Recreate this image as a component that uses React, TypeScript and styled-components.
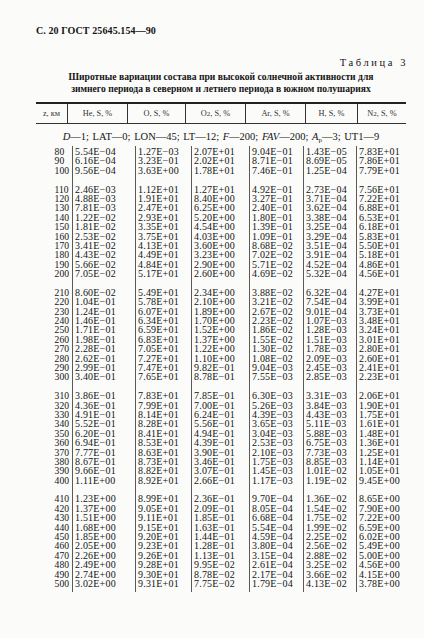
import React from "react";
import styled, { createGlobalStyle } from "styled-components";

const GlobalStyle = createGlobalStyle`
  html, body { margin: 0; padding: 0; background: #fbfbfa; }
  body { font-family: "Liberation Serif", "Times New Roman", serif; color: #141414; }
`;

const Page = styled.div`
  width: 424px;
  height: 638px;
  box-sizing: border-box;
  padding: 25px 18px 0 36px;
  display: flex;
  flex-direction: column;
  overflow: hidden;
`;

const RunningHead = styled.div`
  font-weight: bold;
  font-size: 10px;
  line-height: 12px;
  letter-spacing: 0.1px;
`;

const TableLabel = styled.div`
  margin-top: 20px;
  text-align: right;
  font-size: 10.5px;
  line-height: 12px;
  letter-spacing: 2.6px;
  margin-right: -2px;
`;

const Title = styled.div`
  margin-top: 2px;
  text-align: center;
  font-weight: bold;
  font-size: 9.6px;
  line-height: 12px;
`;

const HeaderRow = styled.div`
  margin-top: 7px;
  display: grid;
  grid-template-columns: 31px 60px 58px 60px 60px 52px 1fr;
  border-top: 2px solid #222;
  border-bottom: 1.5px solid #333;
  height: 19px;
`;

const HeadCell = styled.div<{ $first?: boolean }>`
  display: flex;
  align-items: center;
  justify-content: center;
  font-size: 8.3px;
  color: #333;
  border-left: ${(p) => (p.$first ? "none" : "1px solid #333")};
`;

const Params = styled.div`
  margin-top: 7px;
  text-align: center;
  font-size: 10.5px;
  line-height: 12px;
  word-spacing: 1px;
`;

const Sub = styled.sub`
  font-size: 7px;
  vertical-align: -2px;
  line-height: 0;
`;

const Body = styled.div`
  margin-top: 3px;
  display: grid;
  grid-template-columns: 36px 63px 56px 58px 54px 53px 1fr;
`;

const Column = styled.div<{ $first?: boolean }>`
  display: flex;
  flex-direction: column;
  gap: 9.4px;
  padding-top: 1px;
  padding-bottom: 4px;
  border-left: ${(p) => (p.$first ? "none" : "1px solid #5a5a5a")};
  align-items: ${(p) => (p.$first ? "flex-end" : "flex-start")};
  padding-right: ${(p) => (p.$first ? "3px" : "0")};
  padding-left: ${(p) => (p.$first ? "0" : "2px")};
`;

const Group = styled.div`
  display: flex;
  flex-direction: column;
`;

const Val = styled.div`
  font-size: 10px;
  letter-spacing: 0.2px;
  line-height: 9.4px;
  height: 9.4px;
  white-space: nowrap;
`;

const Z = styled(Val)`
  font-size: 9.6px;
  letter-spacing: 0;
`;

const raw = `
80 5.54E-04 1.27E-03 2.07E+01 9.04E-01 1.43E-05 7.83E+01
90 6.16E-04 3.23E-01 2.02E+01 8.71E-01 8.69E-05 7.86E+01
100 9.56E-04 3.63E+00 1.78E+01 7.46E-01 1.25E-04 7.79E+01
|
110 2.46E-03 1.12E+01 1.27E+01 4.92E-01 2.73E-04 7.56E+01
120 4.88E-03 1.91E+01 8.40E+00 3.27E-01 3.71E-04 7.22E+01
130 7.81E-03 2.47E+01 6.25E+00 2.40E-01 3.62E-04 6.88E+01
140 1.22E-02 2.93E+01 5.20E+00 1.80E-01 3.38E-04 6.53E+01
150 1.81E-02 3.35E+01 4.54E+00 1.39E-01 3.25E-04 6.18E+01
160 2.53E-02 3.75E+01 4.03E+00 1.09E-01 3.29E-04 5.83E+01
170 3.41E-02 4.13E+01 3.60E+00 8.68E-02 3.51E-04 5.50E+01
180 4.43E-02 4.49E+01 3.23E+00 7.02E-02 3.91E-04 5.18E+01
190 5.66E-02 4.84E+01 2.90E+00 5.71E-02 4.52E-04 4.86E+01
200 7.05E-02 5.17E+01 2.60E+00 4.69E-02 5.32E-04 4.56E+01
|
210 8.60E-02 5.49E+01 2.34E+00 3.88E-02 6.32E-04 4.27E+01
220 1.04E-01 5.78E+01 2.10E+00 3.21E-02 7.54E-04 3.99E+01
230 1.24E-01 6.07E+01 1.89E+00 2.67E-02 9.01E-04 3.73E+01
240 1.46E-01 6.34E+01 1.70E+00 2.23E-02 1.07E-03 3.48E+01
250 1.71E-01 6.59E+01 1.52E+00 1.86E-02 1.28E-03 3.24E+01
260 1.98E-01 6.83E+01 1.37E+00 1.55E-02 1.51E-03 3.01E+01
270 2.28E-01 7.05E+01 1.22E+00 1.30E-02 1.78E-03 2.80E+01
280 2.62E-01 7.27E+01 1.10E+00 1.08E-02 2.09E-03 2.60E+01
290 2.99E-01 7.47E+01 9.82E-01 9.04E-03 2.45E-03 2.41E+01
300 3.40E-01 7.65E+01 8.78E-01 7.55E-03 2.85E-03 2.23E+01
|
310 3.86E-01 7.83E+01 7.85E-01 6.30E-03 3.31E-03 2.06E+01
320 4.36E-01 7.99E+01 7.00E-01 5.26E-03 3.84E-03 1.90E+01
330 4.91E-01 8.14E+01 6.24E-01 4.39E-03 4.43E-03 1.75E+01
340 5.52E-01 8.28E+01 5.56E-01 3.65E-03 5.11E-03 1.61E+01
350 6.20E-01 8.41E+01 4.94E-01 3.04E-03 5.88E-03 1.48E+01
360 6.94E-01 8.53E+01 4.39E-01 2.53E-03 6.75E-03 1.36E+01
370 7.77E-01 8.63E+01 3.90E-01 2.10E-03 7.73E-03 1.25E+01
380 8.67E-01 8.73E+01 3.46E-01 1.75E-03 8.85E-03 1.14E+01
390 9.66E-01 8.82E+01 3.07E-01 1.45E-03 1.01E-02 1.05E+01
400 1.11E+00 8.92E+01 2.66E-01 1.17E-03 1.19E-02 9.45E+00
|
410 1.23E+00 8.99E+01 2.36E-01 9.70E-04 1.36E-02 8.65E+00
420 1.37E+00 9.05E+01 2.09E-01 8.05E-04 1.54E-02 7.90E+00
430 1.51E+00 9.11E+01 1.85E-01 6.68E-04 1.75E-02 7.22E+00
440 1.68E+00 9.15E+01 1.63E-01 5.54E-04 1.99E-02 6.59E+00
450 1.85E+00 9.20E+01 1.44E-01 4.59E-04 2.25E-02 6.02E+00
460 2.05E+00 9.23E+01 1.28E-01 3.80E-04 2.56E-02 5.49E+00
470 2.26E+00 9.26E+01 1.13E-01 3.15E-04 2.88E-02 5.00E+00
480 2.49E+00 9.28E+01 9.95E-02 2.61E-04 3.25E-02 4.56E+00
490 2.74E+00 9.30E+01 8.78E-02 2.17E-04 3.66E-02 4.15E+00
500 3.02E+00 9.31E+01 7.75E-02 1.79E-04 4.13E-02 3.78E+00
`;

const groups: string[][][] = raw
  .trim()
  .split("|")
  .map((g) =>
    g
      .trim()
      .split("\n")
      .map((line) => line.trim().split(/\s+/).map((v) => v.replace("-", "−")))
  );

const headers: React.ReactNode[] = [
  "z, км",
  "He, S, %",
  "O, S, %",
  <>O<Sub>2</Sub>, S, %</>,
  "Ar, S, %",
  "H, S, %",
  <>N<Sub>2</Sub>, S, %</>,
];

export default function App() {
  return (
    <>
      <GlobalStyle />
      <Page>
        <RunningHead>С. 20 ГОСТ 25645.154—90</RunningHead>
        <TableLabel>Таблица 3</TableLabel>
        <Title>
          Широтные вариации состава при высокой солнечной активности для
          <br />
          зимнего периода в северном и летнего периода в южном полушариях
        </Title>
        <HeaderRow>
          {headers.map((h, i) => (
            <HeadCell key={i} $first={i === 0}>
              {h}
            </HeadCell>
          ))}
        </HeaderRow>
        <Params>
          <i>D</i>—1; LAT—0; LON—45; LT—12; <i>F</i>—200; <i>FAV</i>—200;{" "}
          <i>A</i>
          <Sub>p</Sub>—3; UT1—9
        </Params>
        <Body>
          {headers.map((_, c) => (
            <Column key={c} $first={c === 0}>
              {groups.map((g, gi) => (
                <Group key={gi}>
                  {g.map((row, ri) =>
                    c === 0 ? (
                      <Z key={ri}>{row[0]}</Z>
                    ) : (
                      <Val key={ri}>{row[c]}</Val>
                    )
                  )}
                </Group>
              ))}
            </Column>
          ))}
        </Body>
      </Page>
    </>
  );
}
